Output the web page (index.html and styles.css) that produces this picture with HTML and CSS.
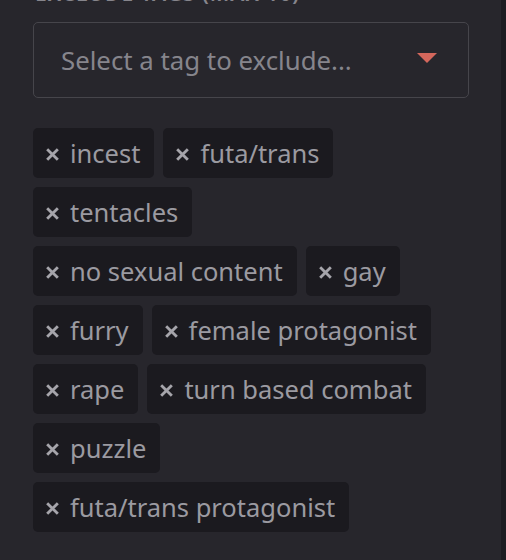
FILE: index.html
```html
<!DOCTYPE html>
<html lang="en">
<head>
    <meta charset="UTF-8">
    <title>Exclude tags</title>
    <link rel="stylesheet" href="styles.css">
</head>
<body>
    <div class="panel">
        <div class="field-label">Exclude tags (max 10)</div>

        <div class="select">
            <span class="placeholder">Select a tag to exclude...</span>
            <span class="caret"></span>
        </div>

        <div class="tags">
            <span class="tag"><svg class="remove" viewBox="0 0 12 12"><path d="M2 2L10 10M10 2L2 10"/></svg>incest</span>
            <span class="tag"><svg class="remove" viewBox="0 0 12 12"><path d="M2 2L10 10M10 2L2 10"/></svg>futa/trans</span>
            <span class="tag"><svg class="remove" viewBox="0 0 12 12"><path d="M2 2L10 10M10 2L2 10"/></svg>tentacles</span>
            <span class="tag"><svg class="remove" viewBox="0 0 12 12"><path d="M2 2L10 10M10 2L2 10"/></svg>no sexual content</span>
            <span class="tag"><svg class="remove" viewBox="0 0 12 12"><path d="M2 2L10 10M10 2L2 10"/></svg>gay</span>
            <span class="tag"><svg class="remove" viewBox="0 0 12 12"><path d="M2 2L10 10M10 2L2 10"/></svg>furry</span>
            <span class="tag"><svg class="remove" viewBox="0 0 12 12"><path d="M2 2L10 10M10 2L2 10"/></svg>female protagonist</span>
            <span class="tag"><svg class="remove" viewBox="0 0 12 12"><path d="M2 2L10 10M10 2L2 10"/></svg>rape</span>
            <span class="tag"><svg class="remove" viewBox="0 0 12 12"><path d="M2 2L10 10M10 2L2 10"/></svg>turn based combat</span>
            <span class="tag"><svg class="remove" viewBox="0 0 12 12"><path d="M2 2L10 10M10 2L2 10"/></svg>puzzle</span>
            <span class="tag"><svg class="remove" viewBox="0 0 12 12"><path d="M2 2L10 10M10 2L2 10"/></svg>futa/trans protagonist</span>
        </div>
    </div>
</body>
</html>
```

FILE: styles.css
```css
:root {
    --page: #1d1c21;
    --panel: #27262c;
    --tag-bg: #1b1a1f;
    --border: #46454b;
    --text: #9b9aa1;
    --muted: #86858c;
    --accent: #d4675c;
}

body {
    margin: 0;
    background-color: var(--page);
    font-family: "Noto Sans", "Open Sans", sans-serif;
    color: var(--text);
    overflow: hidden;
}

.panel {
    display: flow-root;
    width: 501px;
    height: 560px;
    background-color: var(--panel);
    padding: 0 32px 0 33px;
    box-sizing: border-box;
}

.field-label {
    margin-top: -19px;
    height: 24px;
    line-height: 24px;
    padding-left: 2px;
    font-size: 21px;
    font-weight: 600;
    letter-spacing: 1px;
    text-transform: uppercase;
    color: var(--muted);
}

.select {
    margin-top: 17px;
    height: 76px;
    border: 1px solid var(--border);
    border-radius: 5px;
    box-sizing: border-box;
    display: flex;
    align-items: center;
    justify-content: space-between;
    padding: 0 31px 0 27px;
}

.placeholder {
    font-size: 25.8px;
    color: var(--muted);
}

.caret {
    width: 0;
    height: 0;
    border-left: 10px solid transparent;
    border-right: 10px solid transparent;
    border-top: 10px solid var(--accent);
    margin-top: -4px;
}

.tags {
    margin: 30px 36px 0 0;
    display: flex;
    flex-wrap: wrap;
    gap: 9px;
}

.tag {
    display: inline-flex;
    align-items: center;
    gap: 11px;
    height: 50px;
    padding: 0 14px 0 13px;
    background-color: var(--tag-bg);
    border-radius: 5px;
    font-size: 25.5px;
    line-height: 50px;
    white-space: nowrap;
}

.remove {
    width: 13px;
    height: 13px;
    flex-shrink: 0;
    margin-top: 3px;
}

.remove path {
    stroke: #a6a5ab;
    stroke-width: 2.6;
    stroke-linecap: square;
    fill: none;
}
```
